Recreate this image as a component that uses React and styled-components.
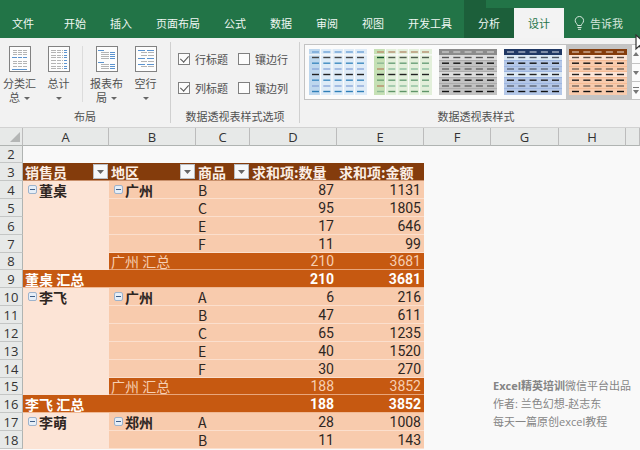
import React, {useState} from 'react'
import styled, {createGlobalStyle} from 'styled-components'

const GlobalStyle = createGlobalStyle`
  * {
    box-sizing: border-box;
  }

  body {
    margin: 0;
    background: #f9f9f9;
    font-family: 'Noto Sans CJK SC', sans-serif;
    font-size: 11px;
    color: #505050;
  }

  button {
    margin: 0;
    padding: 0;
    border: 0;
    background: none;
    font: inherit;
    color: inherit;
  }
`

const Page = styled.div`
  position: relative;
  height: 100vh;
  overflow: hidden;
`

const TabBar = styled.nav`
  display: flex;
  align-items: flex-end;
  height: 38px;
  background: #227447;
  color: #f0f7f3;
`

const Tab = styled.button`
  height: 30px;
  padding: 0 12px;
  white-space: nowrap;
`

const FileTab = styled(Tab)`
  padding-right: 18px;
`

const ContextTab = styled(Tab)`
  padding: 0 14px;
  background: ${props => (props.$active ? '#f3f3f3' : '#1c5f3a')};
  color: ${props => (props.$active ? '#227447' : '#f0f7f3')};
`

const ContextTabs = styled.div`
  display: flex;
  flex-direction: column;
`

const ContextTitle = styled.div`
  width: 22px;
  height: 8px;
  background: #1c5f3a;
`

const TellMe = styled.button`
  display: flex;
  align-items: center;
  gap: 5px;
  height: 30px;
  padding: 0 10px;
  color: #d5e6dc;
  white-space: nowrap;
`

const Pointer = styled.svg`
  position: absolute;
  top: 34px;
  right: -9px;
`

const Ribbon = styled.div`
  display: flex;
  height: 90px;
  padding: 4px 0;
  background: #f2f2f2;
  border-bottom: 1px solid #d2d2d2;
`

const Group = styled.section`
  display: flex;
  flex-direction: column;
  flex: ${props => (props.$grow ? '1' : 'none')};
  min-width: 0;
  border-right: ${props => (props.$grow ? '0' : '1px solid #d0d0d0')};
`

const GroupBody = styled.div`
  display: flex;
  flex: 1;
  padding: ${props => props.$pad || '0'};
`

const GroupName = styled.div`
  height: 14px;
  padding-left: ${props => (props.$indent ? '12px' : '0')};
  line-height: 14px;
  text-align: center;
`

const BigButton = styled.button`
  display: flex;
  flex-direction: column;
  align-items: center;
  gap: 4px;
  width: 39px;
  line-height: 14px;
  white-space: nowrap;
`

const Divider = styled.div`
  width: 1px;
  height: 56px;
  margin: 0 4px;
  background: #dcdcdc;
`

const Arrow = styled.span`
  display: inline-block;
  margin: ${props => (props.$inline ? '0 0 2px 4px' : '0 0 2px')};
  border: solid transparent;
  border-width: 3px 3px 0;
  border-top-color: #666;
`

const Options = styled.div`
  display: grid;
  grid-template-columns: 60px 60px;
  grid-auto-rows: 29px;
`

const Option = styled.label`
  display: flex;
  align-items: center;
  gap: 5px;
  white-space: nowrap;
`

const Check = styled.input`
  appearance: none;
  display: grid;
  place-items: center;
  flex: none;
  width: 12px;
  height: 12px;
  margin: 0;
  border: 1px solid #808080;
  background: #fcfcfc;

  &:checked::after {
    content: '';
    width: 4px;
    height: 7px;
    margin-bottom: 2px;
    border: solid #555;
    border-width: 0 1px 1px 0;
    transform: rotate(42deg);
  }
`

const Gallery = styled.div`
  display: flex;
  flex: 1;
  height: 56px;
  padding-left: 1px;
  overflow: hidden;
  background: #fbfbfb;
  border: 1px solid #c3c3c3;
  border-right: 0;
`

const StyleItem = styled.button`
  flex: none;
  width: 65px;
  height: 54px;
  padding: 4px 3px;
  background: ${props => (props.$selected ? '#c4c4c4' : 'none')};

  svg {
    display: block;
  }
`

const Scroller = styled.div`
  display: grid;
  grid-template-rows: repeat(3, 1fr);
  flex: 1;
  border-left: 1px solid #c3c3c3;

  button + button {
    border-top: 1px solid #c3c3c3;
  }

  svg {
    display: block;
    margin: 0 auto;
  }
`

const Sheet = styled.table`
  width: 100%;
  table-layout: fixed;
  border-collapse: separate;
  border-spacing: 0;
  font-size: 14px;
  color: #2e2622;
`

const Row = styled.tr`
  height: ${props => (props.$short ? 17 : 18)}px;
  line-height: 16px;
`

const ColumnHead = styled.th`
  padding: 0;
  background: #e7e9e8;
  border-right: 1px solid #bcbcbc;
  border-bottom: 1px solid #b0b4b2;
  font-family: 'Open Sans', sans-serif;
  font-size: 13px;
  font-weight: 400;
  color: #333;
`

const RowHead = styled(ColumnHead)`
  border-right-color: #b0b4b2;
  border-bottom-color: #c4c6c5;
`

const Corner = styled.svg`
  display: block;
  margin-left: 9px;
`

const fills = {
  header: '#843c0c',
  light: '#fce4d6',
  item: '#f8cbad',
  subtotal: '#c65911',
  total: '#c65911'
}

const inks = {
  header: '#fbeee5',
  subtotal: '#f6cfb3',
  total: '#fff'
}

const lines = {
  header: '#c9906c',
  light: '#fce4d6',
  item: '#fbdfcd',
  subtotal: '#e8a67c',
  total: '#f0b994'
}

const Cell = styled.td`
  padding: 0 3px 0 2px;
  white-space: nowrap;
  text-align: left;
  font-weight: ${props => (props.$bold ? 700 : 400)};
  background: ${props => fills[props.$kind] || 'none'};
  color: ${props => inks[props.$kind] || 'inherit'};
  border-bottom: ${props =>
    props.$kind ? `1px solid ${lines[props.$kind]}` : '0'};
`

const NumberCell = styled(Cell)`
  font-family: Roboto, sans-serif;
  text-align: right;
`

const HeaderContent = styled.div`
  display: flex;
  align-items: center;
  justify-content: space-between;
  margin-right: -2px;
`

const FilterButton = styled.button`
  display: grid;
  place-items: center;
  width: 15px;
  height: 15px;
  background: #f6f8fa;
  border: 1px solid #b9bec4;
`

const FieldName = styled.div`
  display: flex;
  align-items: center;
  gap: 2px;
  padding-left: 3px;
`

const Collapse = styled.button`
  display: grid;
  place-items: center;
  width: 9px;
  height: 9px;
  border: 1px solid #9db3cc;
  border-radius: 2px;
  background: #e6eef7;

  &::after {
    content: '';
    width: 5px;
    height: 1px;
    background: #3f5f88;
  }
`

const Credits = styled.div`
  position: absolute;
  right: 5px;
  bottom: 19px;
  width: 142px;
  font-family: 'Open Sans', 'Noto Sans CJK SC', sans-serif;
  line-height: 18px;
  white-space: nowrap;
  color: #858585;
`

const layoutIcons = {
  subtotal: {
    gray: [[4, 4, 14], [4, 6, 14], [4, 8, 14], [4, 15, 14], [4, 17, 14], [4, 20, 14]],
    blue: [[3, 11, 15], [3, 23, 15]],
    columns: true
  },
  total: {
    gray: [[3, 4, 12], [3, 6, 12], [3, 9, 12], [3, 11, 12], [3, 14, 12], [3, 17, 12], [3, 20, 12], [3, 22, 12]],
    blue: [[16, 4, 3], [16, 6, 3], [16, 9, 3], [16, 11, 3], [16, 14, 3], [16, 17, 3], [16, 20, 3], [16, 22, 3]],
    columns: true
  },
  report: {
    gray: [[5, 6, 8], [5, 8, 8], [5, 10, 8], [5, 12, 8], [5, 18, 8], [5, 20, 8], [5, 22, 8]],
    blue: [[2, 4, 6], [2, 16, 6], [14, 6, 5], [14, 8, 5], [14, 10, 5], [14, 12, 5], [14, 18, 5], [14, 20, 5], [14, 22, 5]]
  },
  blank: {
    gray: [[6, 6, 6], [13, 6, 6], [6, 9, 6], [13, 9, 6], [6, 15, 6], [13, 15, 6], [6, 20, 6], [13, 20, 6]],
    blue: [[3, 4, 7], [12, 4, 7], [3, 12, 7], [12, 12, 7], [3, 18, 7], [12, 18, 7]]
  }
}

const LayoutIcon = ({name}) => {
  const {gray, blue, columns} = layoutIcons[name]
  const bar = fill => ([x, y, width]) => (
    <rect key={`${x}-${y}`} x={x} y={y} width={width} height="1" fill={fill} />
  )

  return (
    <svg width="22" height="26" viewBox="0 0 22 26">
      <rect x="0.5" y="0.5" width="21" height="25" fill="#fdfdfd" stroke="#828282" />
      {gray.map(bar('#b4b4b4'))}
      {blue.map(bar('#5b93cf'))}
      {columns && <path d="M8.5 3v20M13.5 3v20" stroke="#fdfdfd" />}
    </svg>
  )
}

const dashRows = [3, 8.5, 14.2, 20, 25.5, 31.2, 37, 42.5]

const pivotStyles = [
  {
    name: '浅蓝',
    first: '#bdd7ee',
    body: '#deebf7',
    split: true,
    dashes: ['#6fa3d6', '#444', '#3f8bc0', '#8eaadb', '#222', '#3f8bc0', '#8eaadb', '#2f7fb8']
  },
  {
    name: '浅绿',
    first: '#c5e0b4',
    body: '#e2efda',
    split: true,
    firstDashes: ['#b98d6a', '#12502c', '#8cb894', '#b98d6a', '#222', '#6fa377', '#b98d6a', '#8cb894'],
    dashes: ['#b5906f', '#4c5a4c', '#6a9f78', '#8dbf9f', '#222', '#6a9f78', '#8dbf9f', '#5f9468']
  },
  {
    name: '中等灰',
    head: '#8c8c8c',
    body: '#c2c2c2',
    band: '#dcdcdc',
    line: '#9c9c9c',
    dashes: ['#c8c8c8', '#555', '#111', '#666', '#222', '#222', '#666', '#111']
  },
  {
    name: '中等蓝',
    head: '#203864',
    body: '#b4c7e7',
    band: '#dbe8f4',
    line: '#8faadc',
    dashes: ['#a9b3c4', '#4c5560', '#111', '#5c6675', '#222', '#222', '#5c6675', '#111']
  },
  {
    name: '中等橙',
    head: '#843c0c',
    body: '#f8cbad',
    band: '#fce4d6',
    line: '#f4b183',
    dashes: ['#d0b09c', '#5a4c44', '#111', '#75655b', '#222', '#222', '#75655b', '#111']
  }
]

const StyleThumb = ({look}) => (
  <svg width="58" height="46" viewBox="0 0 58 46">
    <rect width="58" height="46" fill={look.body} />
    {look.first && <rect width="11" height="46" fill={look.first} />}
    {look.band && (
      <React.Fragment>
        <rect y="6" width="58" height="5" fill={look.band} />
        <rect y="23" width="58" height="5" fill={look.band} />
        <path
          d="M0 11.5h58M0 17.5h58M0 22.5h58M0 28.5h58M0 34.5h58M0 39.5h58"
          stroke={look.line}
          strokeOpacity="0.6"
        />
        <rect width="58" height="6" fill={look.head} />
      </React.Fragment>
    )}
    {look.split && (
      <path
        d="M11.5 0v46M23 0v46M34.5 0v46M45.5 0v46M0 5.8h58"
        stroke="#fbfbfb"
        strokeWidth="1.2"
      />
    )}
    {dashRows.map((y, row) =>
      [3, 14.3, 25.6, 36.9, 48].map((x, column) => (
        <rect
          key={`${row}-${column}`}
          x={x}
          y={y - 0.7}
          width="7"
          height="1.4"
          fill={
            column === 0 && look.firstDashes
              ? look.firstDashes[row]
              : look.dashes[row]
          }
        />
      ))
    )}
  </svg>
)

const tabs = ['开始', '插入', '页面布局', '公式', '数据', '审阅', '视图', '开发工具']

const optionNames = ['行标题', '镶边行', '列标题', '镶边列']

const columns = [
  ['A', 86],
  ['B', 87],
  ['C', 54],
  ['D', 87],
  ['E', 87],
  ['F', 67],
  ['G', 68],
  ['H', 67]
]

const rows = [
  {n: 4, person: '董桌', city: '广州', item: 'B', count: 87, amount: 1131},
  {n: 5, item: 'C', count: 95, amount: 1805},
  {n: 6, item: 'E', count: 17, amount: 646},
  {n: 7, item: 'F', count: 11, amount: 99},
  {n: 8, kind: 'subtotal', title: '广州 汇总', count: 210, amount: 3681},
  {n: 9, kind: 'total', title: '董桌 汇总', count: 210, amount: 3681},
  {n: 10, person: '李飞', city: '广州', item: 'A', count: 6, amount: 216},
  {n: 11, item: 'B', count: 47, amount: 611},
  {n: 12, item: 'C', count: 65, amount: 1235},
  {n: 13, item: 'E', count: 40, amount: 1520},
  {n: 14, item: 'F', count: 30, amount: 270},
  {n: 15, kind: 'subtotal', title: '广州 汇总', count: 188, amount: 3852},
  {n: 16, kind: 'total', title: '李飞 汇总', count: 188, amount: 3852},
  {n: 17, person: '李萌', city: '郑州', item: 'A', count: 28, amount: 1008},
  {n: 18, item: 'B', count: 11, amount: 143}
]

const Field = ({name}) =>
  name ? (
    <FieldName>
      <Collapse aria-label={`折叠${name}`} />
      {name}
    </FieldName>
  ) : null

const FilterHeader = ({name}) => (
  <Cell $kind="header" $bold>
    <HeaderContent>
      {name}
      <FilterButton aria-label={`筛选${name}`}>
        <svg width="7" height="4" viewBox="0 0 7 4">
          <path d="M0 0h7L3.5 4z" fill="#666" />
        </svg>
      </FilterButton>
    </HeaderContent>
  </Cell>
)

const PivotRow = ({row}) => {
  const total = row.kind === 'total'
  const kind = row.kind || 'item'

  return (
    <Row $short={row.kind === 'subtotal'}>
      <RowHead scope="row">{row.n}</RowHead>
      <Cell $kind={total ? 'total' : 'light'} $bold>
        {total ? row.title : <Field name={row.person} />}
      </Cell>
      <Cell $kind={kind} $bold={!row.kind}>
        {row.kind === 'subtotal' ? row.title : <Field name={row.city} />}
      </Cell>
      <Cell $kind={kind}>{row.item}</Cell>
      <NumberCell $kind={kind} $bold={total}>
        {row.count}
      </NumberCell>
      <NumberCell $kind={kind} $bold={total}>
        {row.amount}
      </NumberCell>
      <Cell colSpan="4" />
    </Row>
  )
}

const App = () => {
  const [checked, setChecked] = useState({行标题: true, 列标题: true})
  const [selected, setSelected] = useState(4)

  const toggle = name => setChecked({...checked, [name]: !checked[name]})

  return (
    <Page>
      <GlobalStyle />

      <TabBar>
        <FileTab>文件</FileTab>
        {tabs.map(name => (
          <Tab key={name}>{name}</Tab>
        ))}
        <ContextTabs>
          <ContextTitle />
          <ContextTab>分析</ContextTab>
        </ContextTabs>
        <ContextTab $active>设计</ContextTab>
        <TellMe>
          <svg width="11" height="14" viewBox="0 0 11 14" fill="none" stroke="#d5e6dc">
            <path d="M3.5 9.5C3.5 7.8 1.2 7 1.2 4.7a4.2 4.2 0 0 1 8.4 0C9.6 7 7.3 7.8 7.3 9.5zM3.5 11.5h4M4 13.3h3" />
          </svg>
          告诉我
        </TellMe>
      </TabBar>

      <Ribbon>
        <Group>
          <GroupBody $pad="4px 5px 0 0">
            <BigButton>
              <LayoutIcon name="subtotal" />
              <span>
                分类汇
                <br />总<Arrow $inline />
              </span>
            </BigButton>
            <BigButton>
              <LayoutIcon name="total" />
              <span>
                总计
                <br />
                <Arrow />
              </span>
            </BigButton>
            <Divider />
            <BigButton>
              <LayoutIcon name="report" />
              <span>
                报表布
                <br />局<Arrow $inline />
              </span>
            </BigButton>
            <BigButton>
              <LayoutIcon name="blank" />
              <span>
                空行
                <br />
                <Arrow />
              </span>
            </BigButton>
          </GroupBody>
          <GroupName>布局</GroupName>
        </Group>

        <Group>
          <GroupBody $pad="2px 1px 0 7px">
            <Options>
              {optionNames.map(name => (
                <Option key={name}>
                  <Check
                    type="checkbox"
                    checked={Boolean(checked[name])}
                    onChange={() => toggle(name)}
                  />
                  {name}
                </Option>
              ))}
            </Options>
          </GroupBody>
          <GroupName>数据透视表样式选项</GroupName>
        </Group>

        <Group $grow>
          <GroupBody $pad="2px 0 0 4px">
            <Gallery>
              {pivotStyles.map((look, index) => (
                <StyleItem
                  key={look.name}
                  aria-label={look.name}
                  $selected={selected === index}
                  onClick={() => setSelected(index)}
                >
                  <StyleThumb look={look} />
                </StyleItem>
              ))}
              <Scroller>
                <button aria-label="向上">
                  <svg width="6" height="4" viewBox="0 0 6 4">
                    <path d="M0 4h6L3 0z" fill="#777" />
                  </svg>
                </button>
                <button aria-label="向下">
                  <svg width="6" height="4" viewBox="0 0 6 4">
                    <path d="M0 0h6L3 4z" fill="#777" />
                  </svg>
                </button>
                <button aria-label="更多">
                  <svg width="6" height="7" viewBox="0 0 6 7">
                    <path d="M0 0h6v1H0zM0 3h6L3 7z" fill="#777" />
                  </svg>
                </button>
              </Scroller>
            </Gallery>
          </GroupBody>
          <GroupName $indent>数据透视表样式</GroupName>
        </Group>
      </Ribbon>

      <Sheet>
        <colgroup>
          <col width="23" />
          {columns.map(([name, width]) => (
            <col key={name} width={width} />
          ))}
          <col />
        </colgroup>
        <thead>
          <Row>
            <ColumnHead>
              <Corner width="12" height="12" viewBox="0 0 12 12">
                <path d="M11 1v10H1z" fill="#b4b6b5" />
              </Corner>
            </ColumnHead>
            {columns.map(([name]) => (
              <ColumnHead key={name} scope="col">
                {name}
              </ColumnHead>
            ))}
            <ColumnHead />
          </Row>
        </thead>
        <tbody>
          <Row $short>
            <RowHead scope="row">2</RowHead>
            <Cell colSpan="9" />
          </Row>
          <Row>
            <RowHead scope="row">3</RowHead>
            <FilterHeader name="销售员" />
            <FilterHeader name="地区" />
            <FilterHeader name="商品" />
            <Cell $kind="header" $bold>
              求和项:数量
            </Cell>
            <Cell $kind="header" $bold>
              求和项:金额
            </Cell>
            <Cell colSpan="4" />
          </Row>
          {rows.map(row => (
            <PivotRow key={row.n} row={row} />
          ))}
        </tbody>
      </Sheet>

      <Credits>
        <div>
          <b>Excel精英培训</b>微信平台出品
        </div>
        <div>作者: 兰色幻想-赵志东</div>
        <div>每天一篇原创excel教程</div>
      </Credits>

      <Pointer width="14" height="18" viewBox="0 0 14 18">
        <path
          d="M1 1v14l3.5-3.2L7 17l2.4-1-2.5-5H12z"
          fill="#fff"
          stroke="#333"
          strokeWidth="1.2"
        />
      </Pointer>
    </Page>
  )
}

export default App
